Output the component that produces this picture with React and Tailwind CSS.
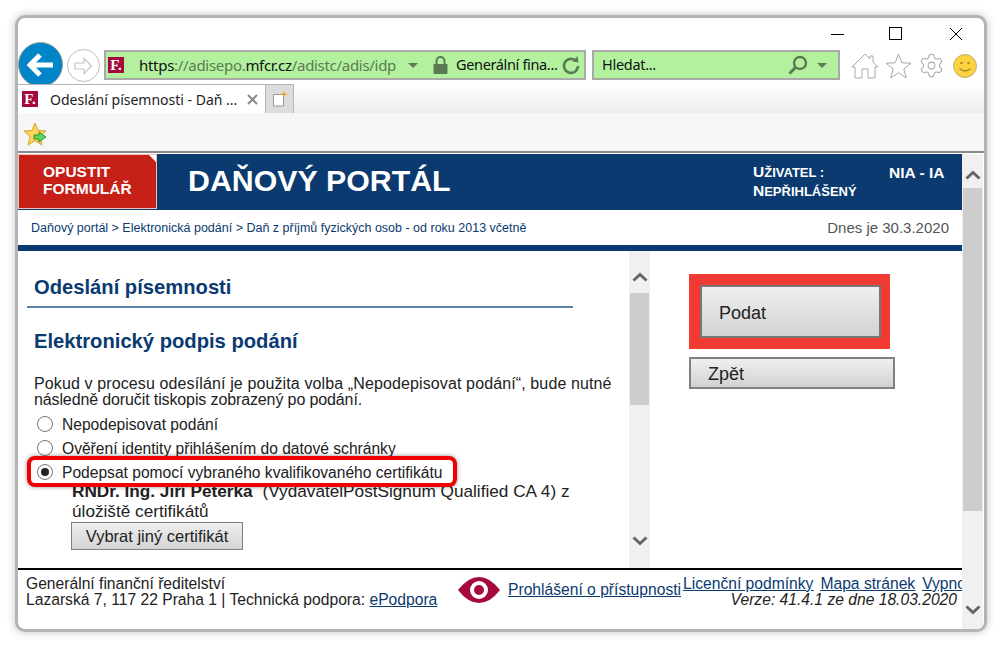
import React from "react";
import { Settings } from "lucide-react";

const Favicon = () => (
  <div className="w-4 h-4 shrink-0 bg-[#a6093d] text-white text-[15px] leading-4 font-bold text-center font-['Liberation_Serif',serif]">
    F.
  </div>
);

const Chevron = ({ down }) => (
  <svg width="16" height="10" viewBox="0 0 16 10" fill="none" className={down ? "rotate-180" : ""}>
    <path d="M1.5 8.5 L8 2.5 L14.5 8.5" stroke="#666" strokeWidth="3" />
  </svg>
);

const Scrollbar = ({ upBox, thumb, downBox }) => (
  <div className="w-[21px] shrink-0 bg-[#f0f0f0] flex flex-col items-center">
    <div className={`${upBox} flex items-center justify-center`}>
      <Chevron />
    </div>
    <div className={`${thumb} w-[19px] bg-[#cdcdcd]`} />
    <div className={`${downBox} flex items-center justify-center`}>
      <Chevron down />
    </div>
  </div>
);

const Radio = ({ checked }) => (
  <div className="w-4 h-4 shrink-0 rounded-full border border-[#767676] bg-white flex items-center justify-center">
    {checked && <div className="w-2 h-2 rounded-full bg-[#222]" />}
  </div>
);

const BrowserChrome = () => (
  <div className="font-['Noto_Sans',sans-serif]">
    {/* window buttons */}
    <div className="h-[32px] flex justify-end items-start pt-[9px]">
      <svg width="14" height="14" viewBox="0 0 14 14" className="mr-[44px]">
        <path d="M0 7.5 H13" stroke="#000" />
      </svg>
      <svg width="14" height="14" viewBox="0 0 14 14" className="mr-[46px]">
        <rect x="0.5" y="0.5" width="12" height="12" fill="none" stroke="#000" />
      </svg>
      <svg width="14" height="14" viewBox="0 0 14 14" className="mr-[21px]">
        <path d="M1 1 L13 13 M13 1 L1 13" stroke="#000" />
      </svg>
    </div>

    {/* address row */}
    <div className="h-[34px] flex items-start">
      <div className="w-[45px] h-[45px] -mt-[8px] rounded-full bg-[#0085c8] border border-[#9a9a9a] flex items-center justify-center shrink-0">
        <svg width="28" height="26" viewBox="0 0 28 26" fill="none">
          <path d="M13 3 L3 13 L13 23 M4 13 H26" stroke="#fff" strokeWidth="5" />
        </svg>
      </div>
      <div className="w-[33px] h-[33px] ml-[4px] -mt-[1px] rounded-full border border-[#bbb] bg-white flex items-center justify-center shrink-0">
        <svg width="21" height="20" viewBox="0 0 21 20" fill="none">
          <path d="M11 2.5 L18.5 10 L11 17.5 V13 H2 V7 H11 Z" stroke="#c4c4c4" strokeWidth="1.2" />
        </svg>
      </div>
      <div className="w-[482px] h-[30px] ml-[4px] bg-[#b3f19f] border-2 border-[#a9a9a9] flex items-center pl-[2px] shrink-0">
        <Favicon />
        <div className="ml-[15px] w-[269px] text-[15px] text-[#5c7a55] whitespace-nowrap tracking-[-0.3px]">
          <span className="text-[#111]">https</span>://adisepo.<span className="text-[#111]">mfcr.cz</span>/adistc/adis/idp
        </div>
        <div className="w-0 h-0 border-x-[5px] border-x-transparent border-t-[5px] border-t-[#5f7a57]" />
        <svg width="15" height="18" viewBox="0 0 15 18" className="ml-[15px] shrink-0">
          <path d="M3.5 8 V5 a4 4 0 0 1 8 0 V8" fill="none" stroke="#5b7a52" strokeWidth="2" />
          <rect x="0.5" y="8" width="14" height="10" rx="1" fill="#5b7a52" />
        </svg>
        <div className="ml-[8px] w-[106px] text-[14.5px] text-[#111] whitespace-nowrap tracking-[-0.35px]">
          Generální fina...
        </div>
        <svg width="18" height="20" viewBox="0 0 18 20" fill="none" className="shrink-0">
          <path d="M13.5 5.5 A7 7 0 1 0 16 11" stroke="#5b7a52" strokeWidth="2.6" />
          <path d="M10.5 6.5 L16.5 7.5 L15.5 1 Z" fill="#5b7a52" />
        </svg>
      </div>
      <div className="w-[248px] h-[30px] ml-[6px] bg-[#b3f19f] border-2 border-[#a9a9a9] flex items-center pl-[8px] shrink-0">
        <div className="w-[186px] text-[14.5px] text-[#111] tracking-[-0.3px]">Hledat...</div>
        <svg width="20" height="20" viewBox="0 0 20 20" fill="none" className="shrink-0">
          <circle cx="12" cy="8" r="6" stroke="#5b7a52" strokeWidth="2.4" />
          <path d="M7.5 12.5 L1.5 18.5" stroke="#5b7a52" strokeWidth="3" />
        </svg>
        <div className="ml-[9px] w-0 h-0 border-x-[5px] border-x-transparent border-t-[5px] border-t-[#5f7a57]" />
      </div>
      <div className="flex items-center gap-[6px] ml-[11px] mt-[2px] text-[#a9a9a9]">
        <svg width="28" height="26" viewBox="0 0 28 26" fill="none" stroke="#a9a9a9">
          <path d="M1 14 L14 1 L19 6 V3 H22 V9 L27 14 H24 V25 H17 V16 H11 V25 H4 V14 Z" />
        </svg>
        <svg width="27" height="26" viewBox="0 0 27 26" fill="none" stroke="#a9a9a9">
          <path d="M13.5 1 L16.8 9.8 L26 10.2 L18.8 16 L21.3 25 L13.5 19.8 L5.7 25 L8.2 16 L1 10.2 L10.2 9.8 Z" />
        </svg>
        <Settings size={27} strokeWidth={0.9} />
        <svg width="24" height="24" viewBox="0 0 24 24" className="ml-[2px]">
          <circle cx="12" cy="12" r="11.5" fill="#fcd23f" stroke="#b0a67a" strokeWidth="0.8" />
          <circle cx="8.5" cy="9" r="1.2" fill="#a98a1c" />
          <circle cx="15.5" cy="9" r="1.2" fill="#a98a1c" />
          <path d="M6.5 14.5 Q12 19.5 17.5 14.5" fill="none" stroke="#a98a1c" strokeWidth="1.2" />
        </svg>
      </div>
    </div>

    {/* tab row */}
    <div className="h-[29px] relative flex bg-gradient-to-b from-white to-[#ececec]">
      <div className="w-[247px] bg-white border-t border-[#b5b5b5] flex items-center pl-[4px]">
        <Favicon />
        <div className="ml-[12px] w-[197px] text-[14px] text-[#222] whitespace-nowrap">
          Odeslání písemnosti - Daň ...
        </div>
        <svg width="11" height="11" viewBox="0 0 11 11">
          <path d="M1 1 L10 10 M10 1 L1 10" stroke="#8a8a8a" strokeWidth="2" />
        </svg>
      </div>
      <div className="w-[29px] bg-[#dcdcdc] border border-b-0 border-[#b5b5b5] flex items-center justify-center">
        <svg width="16" height="16" viewBox="0 0 16 16">
          <path d="M1.5 3.5 H11.5 V15 H1.5 Z" fill="#fff" stroke="#999" />
          <path d="M12 0 L13 2.5 L15.5 3 L13 4 L12 6.5 L11 4 L8.5 3 L11 2.5 Z" fill="#f5a623" />
        </svg>
      </div>
    </div>

    {/* favorites row */}
    <div className="h-[38px] bg-[#f6f6f6] flex items-center pl-[5px] pt-[4px]">
      <svg width="24" height="24" viewBox="0 0 24 24">
        <path d="M12 1 L15 8.5 L23 9 L17 14.5 L19 23 L12 18.5 L5 23 L7 14.5 L1 9 L9 8.5 Z" fill="#fcd65a" stroke="#d8a02c" />
        <path d="M11 13 H16 V10 L23 15 L16 20 V17 H11 Z" fill="#5fd35f" stroke="#2a9a2a" />
      </svg>
    </div>
    <div className="h-[3px] border-t-2 border-[#8a8a8a] bg-white" />
  </div>
);

const Header = () => (
  <div className="h-[56px] bg-[#0a3a70] flex text-white font-['Liberation_Sans',sans-serif]">
    <div className="w-[139px] h-[55px] relative bg-[#c62016] border border-[#f0c0b8] pl-[24px] pt-[8px] text-[15.5px] leading-[17px] font-bold">
      <div>OPUSTIT</div>
      <div>FORMULÁŘ</div>
      <div className="absolute top-0 right-0 w-0 h-0 border-l-[7px] border-l-transparent border-t-[7px] border-t-white" />
    </div>
    <div className="ml-[31px] w-[565px] pt-[9px] text-[30.3px] leading-9 font-bold whitespace-nowrap">DAŇOVÝ PORTÁL</div>
    <div className="w-[136px] pt-[9px] text-[15.5px] leading-[18px] font-bold">
      <div>
        U<span className="text-[13px]">ŽIVATEL :</span>
      </div>
      <div>
        N<span className="text-[13px]">EPŘIHLÁŠENÝ</span>
      </div>
    </div>
    <div className="pt-[10px] text-[15.5px] leading-[18px] font-bold whitespace-nowrap">NIA - IA</div>
  </div>
);

const LeftColumn = () => (
  <div className="w-[611px] shrink-0 overflow-hidden pl-[9px] pr-[56px] text-[15.6px] leading-[17px] text-[#222]">
    <div className="pt-[25px] pb-[8px] pl-[7px] border-b-2 border-[#5a80a8] text-[20.2px] leading-[22px] font-bold text-[#0a3a70]">
      Odeslání písemnosti
    </div>
    <div className="mt-[22px] pl-[7px] text-[20.2px] leading-[22px] font-bold text-[#0a3a70]">
      Elektronický podpis podání
    </div>
    <div className="mt-[24px] pl-[7px] text-[16px] leading-[16px] whitespace-nowrap">
      <div className="tracking-[0.12px]">Pokud v procesu odesílání je použita volba „Nepodepisovat podání“, bude nutné</div>
      <div className="tracking-[-0.12px]">následně doručit tiskopis zobrazený po podání.</div>
    </div>
    <div className="mt-[7px] ml-[10px] flex flex-col gap-[7px]">
      <label className="h-[17px] flex items-center gap-[9px]">
        <Radio />
        <span className="pt-[2px]">Nepodepisovat podání</span>
      </label>
      <label className="h-[17px] flex items-center gap-[9px]">
        <Radio />
        <span className="pt-[2px]">Ověření identity přihlášením do datové schránky</span>
      </label>
      {/* highlighted row: red frame sits over the neighbouring lines */}
      <label className="relative z-10 h-[31px] w-[430px] -my-[7px] -ml-[10px] pl-[6px] flex items-center gap-[9px] bg-white rounded-[8px] border-[4px] border-[#f00000] shadow-[0_0_4px_rgba(0,0,0,0.45)]">
        <Radio checked />
        <span className="pt-[2px] whitespace-nowrap">Podepsat pomocí vybraného kvalifikovaného certifikátu</span>
      </label>
    </div>
    <div className="ml-[45px] mt-[1px] w-[520px] text-[17.2px] leading-[20px]">
      <b>RNDr. Ing. Jiří Peterka</b>
      <span className="ml-[10px]">(VydavatelPostSignum Qualified CA 4) z</span>
      <div>úložiště certifikátů</div>
    </div>
    <button className="ml-[44px] mt-[1px] w-[172px] h-[28px] border border-[#808080] bg-gradient-to-b from-[#efefef] to-[#d4d4d4] text-[16.5px] leading-5 text-[#222]">
      Vybrat jiný certifikát
    </button>
  </div>
);

const RightColumn = () => (
  <div className="flex-1 pl-[39px] pt-[23px] text-[18px] text-[#222]">
    <div className="w-[201px] h-[75px] border-[11px] border-r-[9px] border-[#f13a32]">
      <button className="w-full h-full border-2 border-[#777] bg-gradient-to-b from-[#efefef] to-[#d3d3d3] text-left pl-[17px] pt-[4px]">
        Podat
      </button>
    </div>
    <button className="w-[206px] h-[32px] mt-[8px] border-2 border-[#808080] bg-gradient-to-b from-[#efefef] to-[#d3d3d3] text-left pl-[17px] pt-[2px]">
      Zpět
    </button>
  </div>
);

const Footer = () => (
  <div className="h-[60px] border-t-2 border-black flex text-[15.65px] leading-[16px] text-[#222]">
    <div className="w-[440px] shrink-0 pl-[8px] pt-[6px]">
      <div>Generální finanční ředitelství</div>
      <div>
        Lazarská 7, 117 22 Praha 1 | Technická podpora:{" "}
        <a className="text-[#0a3a70] underline">ePodpora</a>
      </div>
    </div>
    <svg width="42" height="26" viewBox="0 0 42 26" className="mt-[7px] shrink-0">
      <path d="M0 13 Q10 0 21 0 Q32 0 42 13 Q32 26 21 26 Q10 26 0 13 Z" fill="#a6093d" />
      <circle cx="21" cy="13" r="9" fill="#fff" />
      <circle cx="21" cy="13" r="5" fill="#a6093d" />
    </svg>
    <a className="ml-[8px] mt-[12px] w-[175px] shrink-0 text-[#0a3a70] underline whitespace-nowrap">
      Prohlášení o přístupnosti
    </a>
    <div className="flex-1 min-w-0 overflow-hidden pt-[6px]">
      <div className="flex gap-[7px] whitespace-nowrap text-[#0a3a70] underline">
        <a>Licenční podmínky</a>
        <a>Mapa stránek</a>
        <a>Vypnout</a>
      </div>
      <div className="pr-[5px] text-right italic whitespace-nowrap">Verze: 41.4.1 ze dne 18.03.2020</div>
    </div>
  </div>
);

export default function App() {
  return (
    <div className="w-[1001px] h-[649px] bg-white overflow-hidden pt-[15px] pl-[15px] font-['Liberation_Sans',sans-serif]">
      <div className="w-[972px] h-[617px] rounded-[10px] border-[3px] border-[#b4b4b4] bg-white overflow-hidden shadow-[0_0_8px_rgba(0,0,0,0.25)]">
        <BrowserChrome />
        <div className="flex h-[479px]">
          <div className="w-[944px] shrink-0 flex flex-col">
            <Header />
            <div className="h-[35px] flex items-center justify-between pl-[13px] pr-[13px] pt-[1px]">
              <div className="text-[12.5px] text-[#0a3a70]">
                Daňový portál &gt; Elektronická podání &gt; Daň z příjmů fyzických osob - od roku 2013 včetně
              </div>
              <div className="text-[15px] text-[#555]">Dnes je 30.3.2020</div>
            </div>
            <div className="h-[6px] bg-[#0a3a70]" />
            <div className="h-[317px] flex">
              <LeftColumn />
              <Scrollbar upBox="h-[42px] w-full pt-[10px]" thumb="h-[112px]" downBox="h-[163px] w-full pt-[108px]" />
              <RightColumn />
            </div>
            <Footer />
          </div>
          <Scrollbar upBox="h-[34px] w-full pt-[8px]" thumb="h-[323px]" downBox="h-[122px] w-full pt-[75px]" />
        </div>
      </div>
    </div>
  );
}
